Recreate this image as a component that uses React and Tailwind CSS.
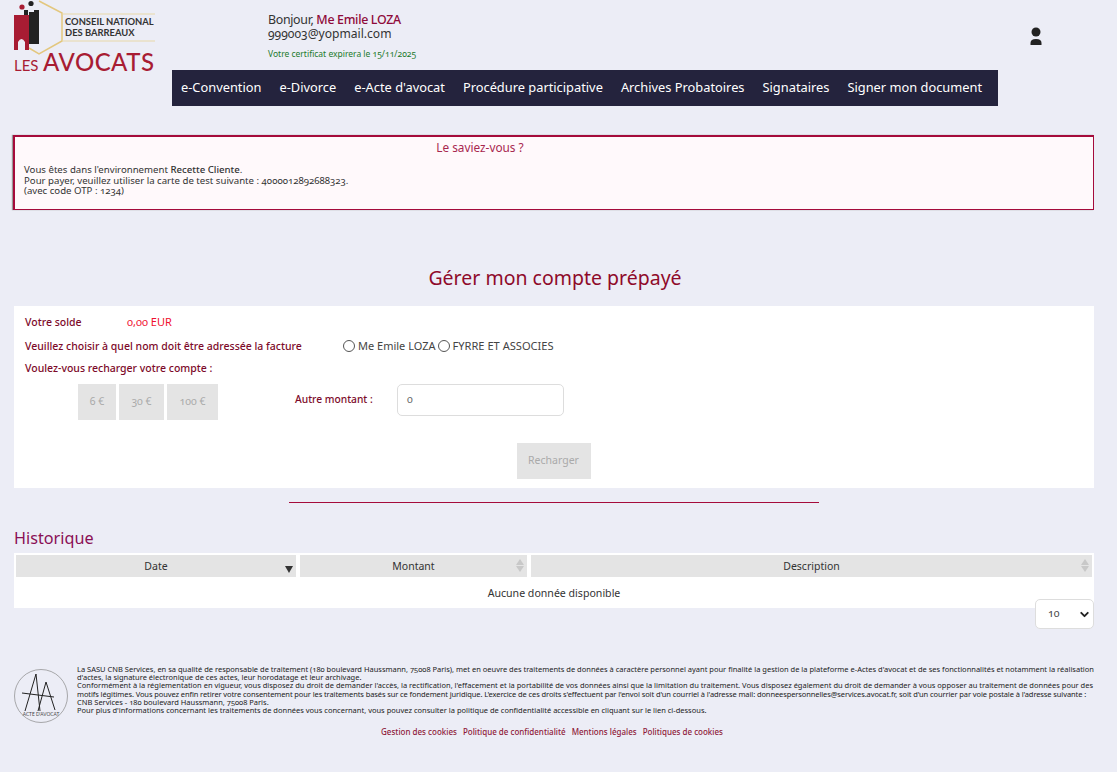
import { ChevronDown } from "lucide-react";

function Logo() {
  return (
    <svg width="142" height="75" viewBox="0 0 142 75" className="block">
      <path d="M15 48 L25 54 L48 41 L48 13 L25 1" fill="none" stroke="#e3c77e" strokeWidth="1.5" />
      <path d="M48 14 H141 M48 41 H141" stroke="#e8d8a8" strokeWidth="1" fill="none" />
      <circle cx="8" cy="7" r="2.6" fill="#a81c33" />
      <circle cx="17" cy="3.5" r="2.6" fill="#222" />
      <path d="M0 15 H15 V50 H11 V42 Q7.5 36 4 42 V50 H0 Z" fill="#a81c33" />
      <path d="M10 10 H14 V15 H10 Z M15 12 H20 V10 H25 V44 H15 Z" fill="#222" />
      <text x="51" y="25" fontFamily="Lato, sans-serif" fontSize="9.4" fontWeight="700" fill="#333">CONSEIL NATIONAL</text>
      <text x="51" y="36" fontFamily="Lato, sans-serif" fontSize="9.4" fontWeight="700" fill="#333">DES BARREAUX</text>
      <text x="0" y="71" fontFamily="Lato, sans-serif" fontSize="15" fill="#a81c33">LES</text>
      <text x="29" y="71" fontFamily="Lato, sans-serif" fontSize="24" fontWeight="500" fill="#a81c33" textLength="111" lengthAdjust="spacing">AVOCATS</text>
    </svg>
  );
}

function ActeLogo() {
  return (
    <svg width="54" height="54" viewBox="0 0 54 54" className="block shrink-0">
      <circle cx="27" cy="27" r="26.5" fill="none" stroke="#888" strokeWidth="0.7" />
      <path d="M22 5 L11 42 M22 5 L26 42 M32 13 L24 42 M32 13 L41 41 M8 24 L40 28" fill="none" stroke="#222" strokeWidth="1" />
      <text x="27" y="46.5" textAnchor="middle" fontFamily="Lato, sans-serif" fontSize="4.8" fill="#444">ACTE D'AVOCAT</text>
    </svg>
  );
}

function SortIcon({ active }) {
  if (active) {
    return <span className="w-0 h-0 border-l-[4px] border-r-[4px] border-t-[7px] border-l-transparent border-r-transparent border-t-[#333] absolute right-[3px] top-[11px]" />;
  }
  return (
    <span className="absolute right-[3px] top-[4px] flex flex-col gap-[1px]">
      <span className="w-0 h-0 border-l-[4px] border-r-[4px] border-b-[6px] border-l-transparent border-r-transparent border-b-[#c8c8c8]" />
      <span className="w-0 h-0 border-l-[4px] border-r-[4px] border-t-[6px] border-l-transparent border-r-transparent border-t-[#c8c8c8]" />
    </span>
  );
}

const navItems = [
  "e-Convention",
  "e-Divorce",
  "e-Acte d'avocat",
  "Procédure participative",
  "Archives Probatoires",
  "Signataires",
  "Signer mon document",
];

export default function App() {
  return (
    <div className="min-h-[772px] bg-[#ecedf6] font-['Noto_Sans',sans-serif] text-[#333] overflow-hidden [font-variant-numeric:oldstyle-nums]">
      <header className="flex h-[106px] pl-[14px]">
        <Logo />
        <div className="ml-[16px] flex-1">
          <div className="flex h-[70px]">
            <div className="ml-[96px] pt-[13px] w-[762px]">
              <p className="text-[12.4px] leading-[14px] tracking-[-0.32px]">
                Bonjour, <span className="font-medium text-[#8f0a3a]">Me Emile LOZA</span>
              </p>
              <p className="text-[12.1px] leading-[14px]">999003@yopmail.com</p>
              <p className="text-[8.5px] leading-[12px] mt-[7px] text-[#1c7a2c]">Votre certificat expirera le 15/11/2025</p>
            </div>
            <svg width="12" height="18" viewBox="0 0 12 18" className="mt-[27px] fill-[#222]">
              <circle cx="6" cy="5" r="4.5" />
              <path d="M0.5 18 V16 Q0.5 12 6 12 Q11.5 12 11.5 16 V18 Z" />
            </svg>
          </div>
          <nav className="w-[826px] h-[36px] bg-[#24233d] flex items-center pl-[9px] gap-[18px]">
            {navItems.map((item) => (
              <a key={item} className="text-white text-[12.83px] whitespace-nowrap">{item}</a>
            ))}
          </nav>
        </div>
      </header>

      <section className="mt-[29px] mx-[13px] w-[1081px] h-[75px] bg-[#fff9fb] border border-[#a50b3b] border-l-2 border-t-2 pl-[9px] shadow-[-1px_0_1px_#999]">
        <h3 className="w-[912px] text-center text-[11.8px] leading-[16px] mt-[2px] text-[#a8274f]">Le saviez-vous ?</h3>
        <p className="text-[9.65px] leading-[10.5px] mt-[10px]">
          Vous êtes dans l'environnement <span className="font-medium">Recette Cliente</span>.<br />
          Pour payer, veuillez utiliser la carte de test suivante : 4000012892688323.<br />
          (avec code OTP : 1234)
        </p>
      </section>

      <h1 className="mt-[54px] text-center text-[19.5px] leading-[28px] text-[#8f0a2a] pr-[7px]">Gérer mon compte prépayé</h1>

      <section className="mt-[14px] mx-[14px] w-[1080px] h-[182px] bg-white pl-[11px] pt-[9px] text-[10.5px] text-[#7d0a2a] font-medium">
        <div className="flex leading-[14px]">
          <span className="w-[102px]">Votre solde</span>
          <span className="text-[#f01030] font-normal text-[11px]">0,00 EUR</span>
        </div>
        <div className="flex leading-[14px] mt-[9px] items-center">
          <span className="w-[318px]">Veuillez choisir à quel nom doit être adressée la facture</span>
          <label className="flex items-center font-normal text-[11px] text-[#444] gap-[3px]">
            <span className="w-[12px] h-[12px] rounded-full border border-[#555] bg-white" />
            <span className="pt-[1px]">Me Emile LOZA</span>
          </label>
          <label className="flex items-center font-normal text-[11.1px] text-[#444] gap-[3px] ml-[2px]">
            <span className="w-[12px] h-[12px] rounded-full border border-[#555] bg-white" />
            <span className="pt-[1px]">FYRRE ET ASSOCIES</span>
          </label>
        </div>
        <p className="leading-[14px] mt-[8px]">Voulez-vous recharger votre compte :</p>
        <div className="flex mt-[9px]">
          <div className="ml-[53px] flex gap-[3px] w-[217px] font-normal text-[#aaa]">
            <span className="w-[38px] h-[36px] bg-[#e4e4e4] flex items-center justify-center">6 €</span>
            <span className="w-[45px] h-[36px] bg-[#e4e4e4] flex items-center justify-center">30 €</span>
            <span className="w-[51px] h-[36px] bg-[#e4e4e4] flex items-center justify-center">100 €</span>
          </div>
          <span className="w-[102px] leading-[14px] mt-[8px] text-[10.25px]">Autre montant :</span>
          <div className="w-[167px] h-[32px] border border-[#ddd] rounded-[5px] flex items-center pl-[9px] font-normal text-[#666]">0</div>
        </div>
        <div className="flex justify-center pr-[12px] mt-[23px]">
          <span className="w-[74px] h-[36px] bg-[#e4e4e4] flex items-center justify-center font-normal text-[#aaa]">Recharger</span>
        </div>
      </section>

      <div className="mt-[14px] ml-[289px] w-[530px] h-[1px] bg-[#a50b3b]" />

      <h2 className="mt-[24px] ml-[14px] text-[16.2px] leading-[22px] text-[#8a0f55]">Historique</h2>

      <section className="mt-[4px] mx-[14px] w-[1080px] h-[55px] bg-white p-[2px] text-[10.5px]">
        <div className="flex gap-[4px] h-[22px]">
          <div className="relative w-[280px] bg-[#e4e4e4] flex items-center justify-center pt-[1px]">Date<SortIcon active /></div>
          <div className="relative w-[227px] bg-[#e4e4e4] flex items-center justify-center pt-[1px]">Montant<SortIcon /></div>
          <div className="relative flex-1 bg-[#e4e4e4] flex items-center justify-center pt-[1px]">Description<SortIcon /></div>
        </div>
        <p className="text-center leading-[33px] h-[31px] text-[10.6px]">Aucune donnée disponible</p>
      </section>

      <div className="flex justify-end mr-[23px] -mt-[9px] relative">
        <div className="w-[59px] h-[30px] bg-white border border-[#ddd] rounded-[5px] flex items-center justify-between pl-[12px] pr-[2px] text-[10.5px] text-[#444]">
          10
          <ChevronDown size={13} strokeWidth={3.5} className="text-[#222]" />
        </div>
      </div>

      <footer className="mt-[36px]">
        <div className="flex pl-[14px] pr-[22px] gap-[9px]">
          <div className="pt-[4px]"><ActeLogo /></div>
          <p className="text-[7.5px] leading-[8.2px] text-[#222] w-[1018px] whitespace-nowrap">
            La SASU CNB Services, en sa qualité de responsable de traitement (180 boulevard Haussmann, 75008 Paris), met en oeuvre des traitements de données à caractère personnel ayant pour finalité la gestion de la plateforme e-Actes d'avocat et de ses fonctionnalités et notamment la réalisation<br />
            d'actes, la signature électronique de ces actes, leur horodatage et leur archivage.<br />
            Conformément à la réglementation en vigueur, vous disposez du droit de demander l'accès, la rectification, l'effacement et la portabilité de vos données ainsi que la limitation du traitement. Vous disposez également du droit de demander à vous opposer au traitement de données pour des<br />
            <span className="tracking-[-0.1px]">motifs légitimes. Vous pouvez enfin retirer votre consentement pour les traitements basés sur ce fondement juridique. L'exercice de ces droits s'effectuent par l'envoi soit d'un courriel à l'adresse mail: donneespersonnelles@services.avocat.fr, soit d'un courrier par voie postale à l'adresse suivante :</span><br />
            CNB Services - 180 boulevard Haussmann, 75008 Paris.<br />
            Pour plus d'informations concernant les traitements de données vous concernant, vous pouvez consulter la politique de confidentialité accessible en cliquant sur le lien ci-dessous.
          </p>
        </div>
        <div className="flex justify-center gap-[6px] mt-[3px] pr-[13px] text-[8px] leading-[12px] font-medium text-[#8f1a3a]">
          <a>Gestion des cookies</a>
          <a>Politique de confidentialité</a>
          <a>Mentions légales</a>
          <a>Politiques de cookies</a>
        </div>
      </footer>
    </div>
  );
}
